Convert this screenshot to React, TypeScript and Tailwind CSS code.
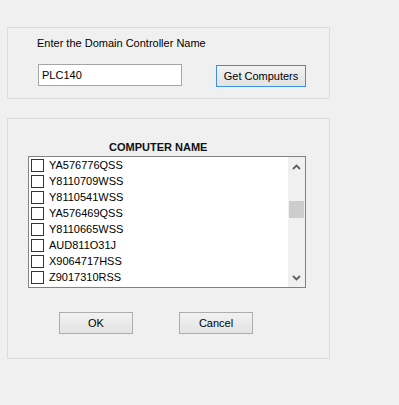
import React from "react";

const items = [
  "YA576776QSS",
  "Y8110709WSS",
  "Y8110541WSS",
  "YA576469QSS",
  "Y8110665WSS",
  "AUD811O31J",
  "X9064717HSS",
  "Z9017310RSS",
];

export default function App() {
  return (
    <div
      className="w-[399px] h-[405px] bg-[#f0f0f0] pt-[27px] pl-[7px] text-[11px] text-black"
      style={{ fontFamily: '"Liberation Sans", Arial, sans-serif' }}
    >
      <div className="w-[323px] h-[72px] border border-[#dcdcdc] pl-[29px] pt-[8px]">
        <div className="leading-[14px]">Enter the Domain Controller Name</div>
        <div className="flex items-start mt-[14px]">
          <div className="ml-[1px] w-[144px] h-[22px] bg-white border border-[#a5a5a5] pl-[3px] leading-[20px]">
            PLC140
          </div>
          <div className="ml-[34px] mt-[1px] w-[90px] h-[22px] border border-[#3c8fe8] bg-gradient-to-b from-[#f2f2f2] to-[#e3e3e3] flex items-center justify-center leading-[14px]">
            Get Computers
          </div>
        </div>
      </div>

      <div className="mt-[19px] w-[323px] h-[241px] border border-[#dcdcdc] pl-[20px] pt-[21px]">
        <div className="ml-[81px] font-bold leading-[14px] text-[#111]">COMPUTER NAME</div>
        <div className="mt-[2px] w-[278px] h-[132px] bg-white border border-[#828282] flex">
          <div className="flex-1 flex flex-col">
            {items.map((t) => (
              <div key={t} className="h-[16px] flex items-center">
                <div className="ml-[2px] w-[13px] h-[13px] border border-[#333333] bg-white" />
                <div className="ml-[5px] leading-[14px]">{t}</div>
              </div>
            ))}
          </div>
          <div className="w-[17px] bg-[#f0f0f0] relative flex flex-col items-center">
            <svg width="9" height="6" viewBox="0 0 9 6" className="mt-[7px]">
              <path d="M1 5 L4.5 1.5 L8 5" stroke="#606060" strokeWidth="1.8" fill="none" />
            </svg>
            <div className="mt-[31px] w-[15px] h-[17px] bg-[#cdcdcd]" />
            <div className="flex-1" />
            <svg width="9" height="6" viewBox="0 0 9 6" className="mb-[6px]">
              <path d="M1 1 L4.5 4.5 L8 1" stroke="#606060" strokeWidth="1.8" fill="none" />
            </svg>
          </div>
        </div>
        <div className="flex mt-[24px] ml-[31px]">
          <div className="w-[74px] h-[22px] border border-[#adadad] bg-gradient-to-b from-[#f2f2f2] to-[#e3e3e3] flex items-center justify-center leading-[14px]">
            OK
          </div>
          <div className="ml-[46px] w-[74px] h-[22px] border border-[#adadad] bg-gradient-to-b from-[#f2f2f2] to-[#e3e3e3] flex items-center justify-center leading-[14px]">
            Cancel
          </div>
        </div>
      </div>
    </div>
  );
}
